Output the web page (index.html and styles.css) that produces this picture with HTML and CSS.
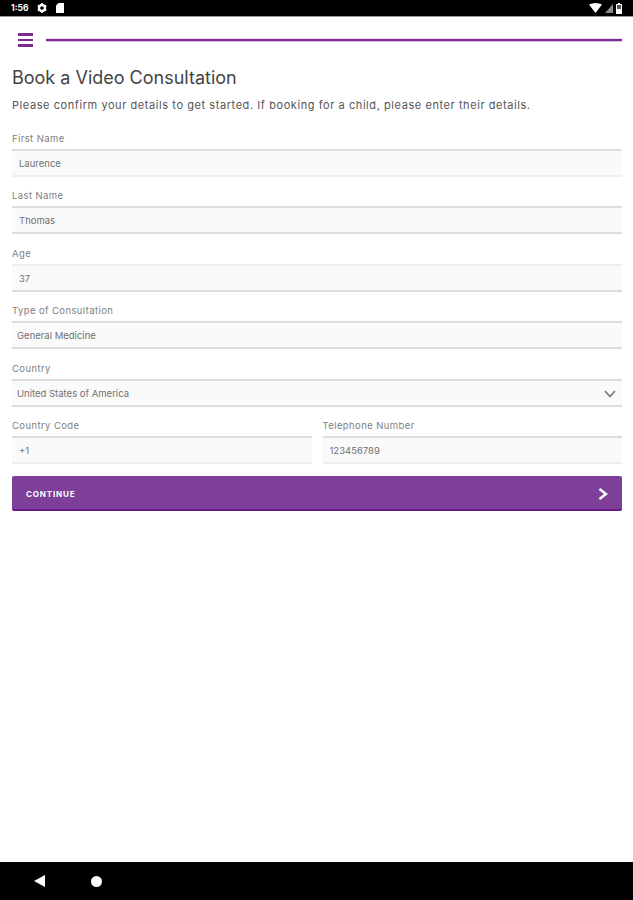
FILE: index.html
```html
<!DOCTYPE html>
<html lang="en">
<head>
    <meta charset="UTF-8">
    <meta name="viewport" content="width=device-width, initial-scale=1.0">
    <title>Book a Video Consultation</title>
    <link rel="stylesheet" href="styles.css">
</head>
<body>
    <div class="status-bar">
        <div class="status-left">
            <span class="status-time">1:56</span>
            <svg width="10" height="10" viewBox="0 0 10 10"><circle cx="5" cy="5" r="3" fill="none" stroke="#fff" stroke-width="2.4"/><path d="M5 0v2M5 8v2M0.7 2.5l1.7 1M7.6 6.5l1.7 1M0.7 7.5l1.7-1M7.6 3.5l1.7-1" stroke="#fff" stroke-width="1.6"/></svg>
            <svg width="8" height="10" viewBox="0 0 8 10"><path d="M2.5 0H8v10H0V2.5z" fill="#fff"/></svg>
        </div>
        <div class="status-right">
            <svg width="13" height="10" viewBox="0 0 13 10"><path d="M0 1.5Q6.5-1.5 13 1.5L6.5 10z" fill="#fff"/></svg>
            <svg width="8" height="9" viewBox="0 0 8 9"><path d="M8 0v9H0z" fill="#8a8a8a"/></svg>
            <svg width="6" height="11" viewBox="0 0 6 11"><path d="M2 0h2v1h2v10H0V1h2z" fill="#fff"/><rect x="1" y="2" width="4" height="4" fill="#555"/></svg>
        </div>
    </div>

    <div class="top-bar">
        <div class="menu-icon"><span></span><span></span><span></span></div>
        <div class="top-line"></div>
    </div>

    <main class="content">
        <h1>Book a Video Consultation</h1>
        <p class="intro">Please confirm your details to get started. If booking for a child, please enter their details.</p>

        <div class="field">
            <div class="field-label">First Name</div>
            <div class="field-box indent soft-bottom">Laurence</div>
        </div>
        <div class="field">
            <div class="field-label">Last Name</div>
            <div class="field-box indent">Thomas</div>
        </div>
        <div class="field">
            <div class="field-label">Age</div>
            <div class="field-box indent soft-top">37</div>
        </div>
        <div class="field">
            <div class="field-label">Type of Consultation</div>
            <div class="field-box">General Medicine</div>
        </div>
        <div class="field">
            <div class="field-label">Country</div>
            <div class="field-box">
                United States of America
                <svg class="chevron" width="12" height="8" viewBox="0 0 12 8"><path d="M1 1l5 5.5L11 1" fill="none" stroke="#777" stroke-width="1.7"/></svg>
            </div>
        </div>
        <div class="field-row">
            <div class="field">
                <div class="field-label">Country Code</div>
                <div class="field-box indent soft-bottom">+1</div>
            </div>
            <div class="field">
                <div class="field-label">Telephone Number</div>
                <div class="field-box indent soft-bottom">123456789</div>
            </div>
        </div>

        <button class="continue-btn">
            <span>CONTINUE</span>
            <svg width="10" height="12" viewBox="0 0 10 12"><path d="M1.5 1l6.5 5-6.5 5" fill="none" stroke="#fff" stroke-width="2.4"/></svg>
        </button>
    </main>

    <div class="nav-bar">
        <svg width="11" height="12" viewBox="0 0 11 12"><path d="M11 0v12L0 6z" fill="#fff"/></svg>
        <div class="nav-home"></div>
    </div>
</body>
</html>
```

FILE: styles.css
```css
html, body {
    height: 100%;
}
body {
    margin: 0;
    height: 900px;
    display: flex;
    flex-direction: column;
    background-color: #fff;
    font-family: Inter, "Liberation Sans", sans-serif;
    color: #444;
    overflow: hidden;
}
.status-bar {
    height: 16px;
    background-color: #000;
    border-bottom: 1px solid #999;
    display: flex;
    justify-content: space-between;
    align-items: center;
    padding: 0 11px 0 11px;
    flex-shrink: 0;
}
.status-left, .status-right {
    display: flex;
    align-items: center;
}
.status-left {
    gap: 9px;
}
.status-right {
    gap: 3px;
}
.status-time {
    color: #fff;
    font-size: 8.5px;
    font-weight: 700;
}
.top-bar {
    display: flex;
    align-items: center;
    gap: 13px;
    padding: 16px 11px 0 18px;
}
.menu-icon {
    display: flex;
    flex-direction: column;
    gap: 3px;
    width: 15px;
}
.menu-icon span {
    height: 2.5px;
    background-color: #7b2a96;
}
.top-line {
    flex: 1;
    height: 2px;
    background-color: #7b2a96;
    box-shadow: 0 1px 0 #d9bfe2, 0 -1px 0 #ead9ef;
}
.content {
    flex: 1;
    padding: 0 11px 0 12px;
}
h1 {
    margin: 19px 0 0;
    font-size: 18px;
    line-height: 24px;
    font-weight: 400;
    color: #444;
}
.intro {
    margin: 7px 0 19px;
    font-size: 11px;
    line-height: 16px;
    letter-spacing: 0.57px;
    color: #555;
}
.field {
    margin-bottom: 12.5px;
}
.field-label {
    font-size: 9.5px;
    line-height: 13px;
    letter-spacing: 0.4px;
    color: #808080;
    margin-bottom: 4px;
}
.field-box {
    position: relative;
    height: 28px;
    box-sizing: border-box;
    border-top: 2px solid #ddd;
    border-bottom: 2px solid #ddd;
    background-color: #fafafa;
    padding-left: 5px;
    font-size: 9.5px;
    line-height: 25px;
    color: #707070;
}
.field-box.indent {
    padding-left: 7px;
}
.field-box.soft-bottom {
    border-bottom-color: #eee;
}
.field-box.soft-top {
    border-top-color: #eee;
}
.chevron {
    position: absolute;
    right: 6px;
    top: 9px;
}
.field-row {
    display: flex;
    gap: 11px;
}
.field-row .field {
    flex: 1;
    margin-bottom: 0;
}
.continue-btn {
    width: 100%;
    height: 35px;
    margin-top: 12.4px;
    padding: 2px 14px 0;
    display: flex;
    justify-content: space-between;
    align-items: center;
    border: none;
    border-bottom: 2px solid #6a1b8a;
    border-radius: 2px;
    background-color: #7d3f98;
    color: #fff;
    font-family: inherit;
    font-size: 8px;
    font-weight: 700;
    letter-spacing: 0.85px;
}
.nav-bar {
    height: 38px;
    background-color: #000;
    display: flex;
    align-items: center;
    gap: 46px;
    padding-left: 34px;
    flex-shrink: 0;
}
.nav-home {
    width: 11px;
    height: 11px;
    border-radius: 50%;
    background-color: #fff;
}
```
